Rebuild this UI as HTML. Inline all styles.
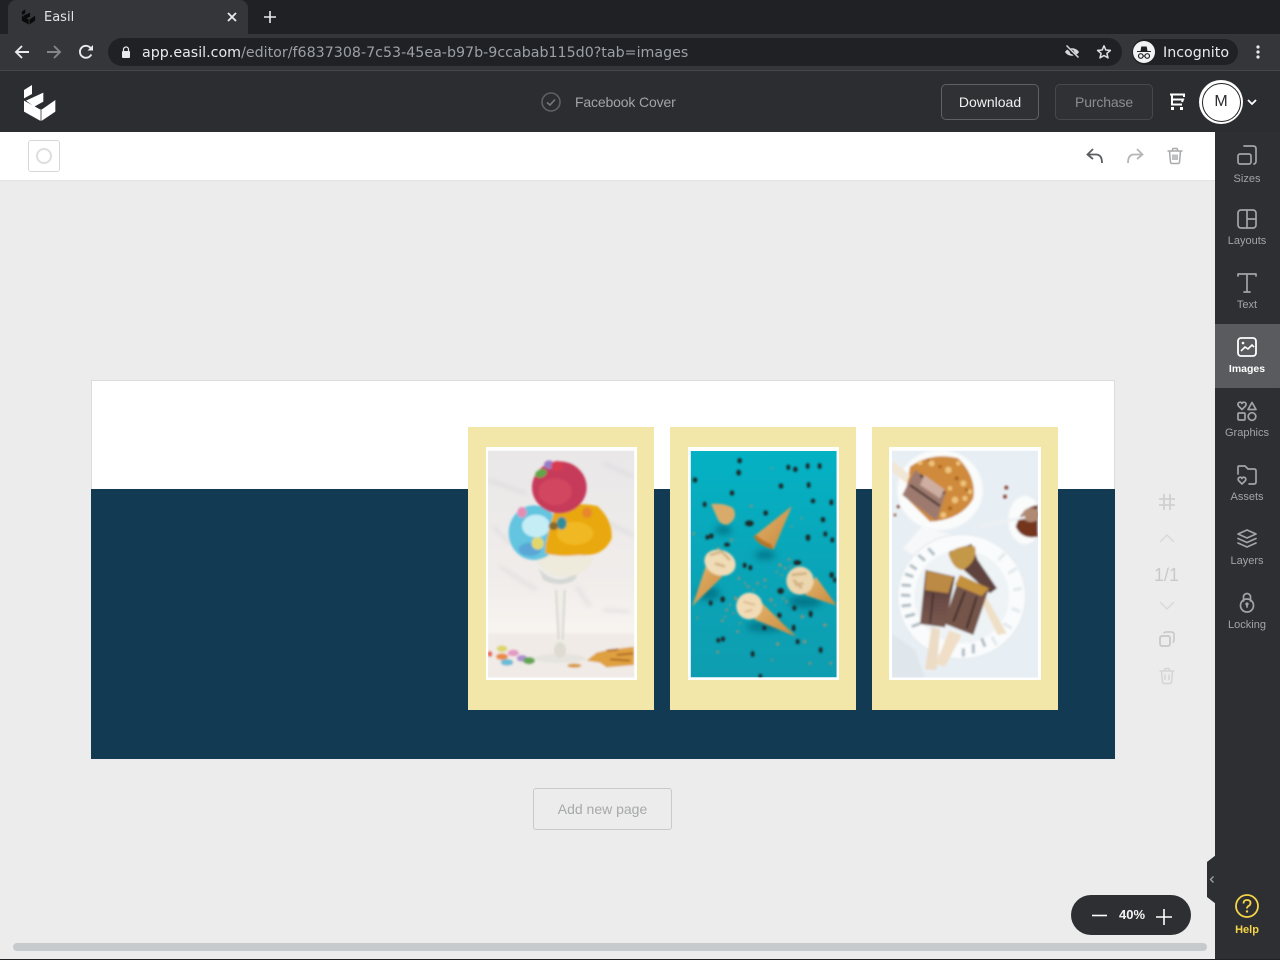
<!DOCTYPE html>
<html><head><meta charset="utf-8"><title>Easil</title>
<style>
*{box-sizing:border-box}
html,body{margin:0;padding:0;width:1280px;height:960px;overflow:hidden;background:#ececec;font-family:"Liberation Sans",sans-serif}
.a{position:absolute}
.t{position:absolute;white-space:nowrap;line-height:1}
.d{font-family:"DejaVu Sans",sans-serif}
svg{position:absolute;overflow:visible}
.lab{position:absolute;left:1214.500px;width:65px;text-align:center;font-size:11px;line-height:12px;color:#a3a4a6}
.ic{fill:none;stroke:#a3a4a6;stroke-width:1.7;stroke-linecap:round;stroke-linejoin:round}
</style></head><body>
<!-- browser chrome -->
<div class="a" style="left:0;top:0;width:1280px;height:34px;background:#202124"></div>
<div class="a" style="left:8px;top:0;width:240px;height:34px;background:#35363a;border-radius:8px 8px 0 0"></div>
<svg style="left:20px;top:9px" width="17" height="16" viewBox="20 12 102 114"><path d="M24 30 L48 15 V42 L24 55 Z M30 62 L82 38 V65 L55 80 Z M24 62 L72 88 V122 L24 95 Z M78 88 L118 60 V95 L78 122 Z" fill="#0a0a0a"/></svg>
<div class="t d" style="left:44px;top:11px;font-size:13px;color:#e3e4e6">Easil</div>
<svg style="left:227px;top:12px" width="10" height="10"><path d="M1 1 L9 9 M9 1 L1 9" stroke="#e8eaed" stroke-width="1.8"/></svg>
<svg style="left:264px;top:11px" width="12" height="12"><path d="M6 0 V12 M0 6 H12" stroke="#e8eaed" stroke-width="1.6"/></svg>
<div class="a" style="left:0;top:34px;width:1280px;height:37px;background:#35363a;border-bottom:1px solid #45464a"></div>
<svg style="left:14px;top:44px" width="16" height="16"><path d="M15 8 H2 M8 2 L2 8 L8 14" fill="none" stroke="#e8eaed" stroke-width="1.9"/></svg>
<svg style="left:46px;top:44px" width="16" height="16"><path d="M1 8 H14 M8 2 L14 8 L8 14" fill="none" stroke="#85868a" stroke-width="1.9"/></svg>
<svg style="left:78px;top:44px" width="16" height="16" viewBox="0 0 16 16"><path d="M13.3 10.5 A6 6 0 1 1 12.6 4" fill="none" stroke="#e8eaed" stroke-width="1.9"/><path d="M9.5 6.5 H15 V1 Z" fill="#e8eaed"/></svg>
<div class="a" style="left:108px;top:38px;width:1014px;height:28px;background:#202124;border-radius:14px"></div>
<svg style="left:121px;top:46px" width="10" height="12"><path d="M2.5 5 V3.5 A2.5 2.5 0 0 1 7.5 3.5 V5" fill="none" stroke="#e8eaed" stroke-width="1.2"/><rect x="1" y="5" width="8" height="7" rx="1" fill="#e8eaed"/></svg>
<div class="t d" style="left:142px;top:45px;font-size:14.24px;color:#e8eaed;line-height:16px">app.easil.com<span style="color:#9aa0a6">/editor/f6837308-7c53-45ea-b97b-9ccabab115d0?tab=images</span></div>
<svg style="left:1064px;top:44px" width="16" height="16" viewBox="0 0 16 16"><path d="M1 8 C4 3 12 3 15 8 C12 13 4 13 1 8 Z" fill="#d6d7d9"/><circle cx="8" cy="8" r="2.2" fill="#202124"/><path d="M2 2 L14 14" stroke="#202124" stroke-width="3"/><path d="M2.5 1.5 L14.5 13.5" stroke="#d6d7d9" stroke-width="1.5"/></svg>
<svg style="left:1096px;top:44px" width="16" height="16" viewBox="0 0 16 16"><path d="M8 1.8 L9.8 6 L14.4 6.4 L10.9 9.4 L12 13.9 L8 11.5 L4 13.9 L5.1 9.4 L1.6 6.4 L6.2 6 Z" fill="none" stroke="#e0e1e3" stroke-width="1.5" stroke-linejoin="round"/></svg>
<div class="a" style="left:1132px;top:39px;width:106px;height:26px;background:#202124;border-radius:13px"></div>
<svg style="left:1133px;top:41px" width="22" height="22" viewBox="0 0 22 22"><circle cx="11" cy="11" r="11" fill="#f1f3f4"/><path d="M4 10 H18 V11 H4 Z M7.5 10 L8.3 5.5 H13.7 L14.5 10 Z" fill="#202124"/><circle cx="7.8" cy="15" r="2.3" fill="none" stroke="#202124" stroke-width="1.2"/><circle cx="14.2" cy="15" r="2.3" fill="none" stroke="#202124" stroke-width="1.2"/><path d="M10 15 H12" stroke="#202124"/></svg>
<div class="t d" style="left:1163px;top:45px;font-size:14.24px;line-height:16px;color:#e8eaed">Incognito</div>
<svg style="left:1255px;top:45px" width="6" height="14"><circle cx="3" cy="2" r="1.6" fill="#e8eaed"/><circle cx="3" cy="7" r="1.6" fill="#e8eaed"/><circle cx="3" cy="12" r="1.6" fill="#e8eaed"/></svg>

<!-- app header -->
<div class="a" style="left:0;top:71px;width:1280px;height:61px;background:#2c2d30"></div>
<svg style="left:16px;top:80px" width="48" height="44" viewBox="0 0 144 132"><path d="M24 30 L48 15 V42 L24 55 Z M30 62 L82 38 V65 L55 80 Z M24 62 L72 88 V122 L24 95 Z M78 88 L118 60 V95 L78 122 Z" fill="#fff"/><path d="M72 88 L78 88 V122 L72 122 Z" fill="#b0b0b0"/></svg>
<svg style="left:541px;top:92px" width="20" height="20"><circle cx="10" cy="10" r="9" fill="none" stroke="#5f6063" stroke-width="1.6"/><path d="M6 10.5 L9 13 L14 7.5" fill="none" stroke="#77787b" stroke-width="1.6"/></svg>
<div class="t" style="left:575px;top:95px;font-size:14px;letter-spacing:-.15px;color:#a3a4a6">Facebook Cover</div>
<div class="a" style="left:941px;top:84px;width:98px;height:36px;border:1px solid #606164;border-radius:5px;background:#303134"></div>
<div class="t" style="left:941px;width:98px;text-align:center;top:95px;font-size:14px;color:#f1f1f2">Download</div>
<div class="a" style="left:1055px;top:84px;width:98px;height:36px;border:1px solid #47484b;border-radius:5px;background:#303134"></div>
<div class="t" style="left:1055px;width:98px;text-align:center;top:95px;font-size:14px;letter-spacing:-.15px;color:#8c8d8f">Purchase</div>
<svg style="left:1169px;top:93px" width="18" height="18" viewBox="0 0 18 18"><path d="M1 1.500 H15 V4 M3 1.500 V11.500 H13 M3 6.500 H14 L13 9" fill="none" stroke="#fff" stroke-width="2"/><rect x="2" y="14" width="3" height="3" fill="#fff"/><rect x="11" y="14" width="3" height="3" fill="#fff"/></svg>
<div class="a" style="left:1199px;top:80px;width:44px;height:44px;border-radius:50%;background:#fff"></div>
<div class="a" style="left:1201.500px;top:82.500px;width:39px;height:39px;border-radius:50%;background:#fff;border:1.500px solid #222"></div>
<div class="t" style="left:1199px;width:44px;text-align:center;top:94px;font-size:16px;color:#2c2d30">M</div>
<svg style="left:1247px;top:98px" width="10" height="8"><path d="M1 2 L5 6 L9 2" fill="none" stroke="#fff" stroke-width="1.8"/></svg>

<!-- toolbar -->
<div class="a" style="left:0;top:132px;width:1215px;height:49px;background:#fff;border-bottom:1px solid #e4e4e4"></div>
<div class="a" style="left:28px;top:140px;width:32px;height:32px;border:1px solid #d8d8d8;border-radius:3px;background:#fff"></div>
<div class="a" style="left:36px;top:148px;width:16px;height:16px;border:2px solid #dedede;border-radius:50%"></div>
<svg style="left:1086px;top:147px" width="18" height="18" viewBox="0 0 18 18"><path d="M7 2 L1.500 7.500 L7 12 M2 7.500 H10 C14 7.500 16 10 16 16" fill="none" stroke="#5c5d60" stroke-width="1.8"/></svg>
<svg style="left:1126px;top:147px" width="18" height="18" viewBox="0 0 18 18"><path d="M11 2 L16.500 7.500 L11 12 M16 7.500 H8 C4 7.500 2 10 2 16" fill="none" stroke="#b5b6b8" stroke-width="1.8"/></svg>
<svg style="left:1166px;top:147px" width="18" height="18" viewBox="0 0 18 18"><path d="M1.500 4 H16.500 M6 4 L7 1.500 H11 L12 4 M3.500 4 L4.500 15 Q4.600 16.500 6 16.500 H12 Q13.400 16.500 13.500 15 L14.500 4 M7 7.500 V13 M11 7.500 V13 M9 7.500 V13" fill="none" stroke="#a9aaac" stroke-width="1.500"/></svg>

<!-- canvas -->
<div class="a" style="left:91px;top:380px;width:1024px;height:110px;background:#fff;border:1px solid #dcdcdc;border-bottom:0"></div>
<div class="a" style="left:91px;top:489px;width:1024px;height:270px;background:#123a52"></div>

<!-- frame 1 -->
<div class="a" style="left:468px;top:427px;width:186px;height:283px;background:#f2e6a8"></div>
<div class="a" style="left:486px;top:447px;width:151px;height:233px;background:#fff"></div>
<svg style="left:460px;top:420px" width="210" height="300" viewBox="0 0 630 900">
<defs>
<clipPath id="c1"><rect x="84" y="92" width="439" height="681"/></clipPath>
<clipPath id="c2"><rect x="77" y="93" width="438" height="679"/></clipPath>
<clipPath id="c3"><rect x="81" y="92" width="438" height="681"/></clipPath>
<linearGradient id="m1" x1="0" y1="0" x2="0" y2="1"><stop offset="0" stop-color="#e9e7e8"/><stop offset=".6" stop-color="#f1edeb"/><stop offset=".78" stop-color="#f7f4f0"/><stop offset="1" stop-color="#f4efe9"/></linearGradient>
<linearGradient id="cone" x1="0" y1="0" x2="1" y2="1"><stop offset="0" stop-color="#e2b26c"/><stop offset="1" stop-color="#c98a3c"/></linearGradient>
<linearGradient id="pop" x1="0" y1="0" x2="0" y2="1"><stop offset="0" stop-color="#3e2a28"/><stop offset=".5" stop-color="#6a4a44"/><stop offset="1" stop-color="#7a5a50"/></linearGradient>
<filter id="b" x="-10%" y="-10%" width="120%" height="120%"><feGaussianBlur stdDeviation="3"/></filter>
<filter id="b2" x="-20%" y="-20%" width="140%" height="140%"><feGaussianBlur stdDeviation="10"/></filter>
<filter id="b3" x="-20%" y="-20%" width="140%" height="140%"><feGaussianBlur stdDeviation="6"/></filter>
</defs>
<g clip-path="url(#c1)"><rect x="84" y="92" width="439" height="681" fill="url(#m1)"/>
<path d="M84 180 L200 220 M430 130 L520 170 M400 290 L520 345 M120 440 L230 510 M350 500 L390 560 M430 570 L510 575 M100 320 L150 370" stroke="#d4d2d8" stroke-width="8" fill="none" opacity=".6" filter="url(#b3)"/>
<g filter="url(#b)">
<rect x="84" y="640" width="439" height="133" fill="#f0ebe6"/>
<path d="M235 445 Q300 510 360 445 L345 480 Q300 505 250 480 Z" fill="#d4d8d4"/>
<path d="M284 505 L318 505 L310 620 L315 680 L290 680 L296 620 Z" fill="#efeee8"/>
<path d="M288 510 L296 660 M314 510 L308 660" stroke="#c0beb4" stroke-width="3"/>
<ellipse cx="300" cy="715" rx="78" ry="14" fill="#e6e4de"/><ellipse cx="300" cy="690" rx="18" ry="24" fill="#dedbd2"/>
<path d="M228 415 Q310 385 402 412 Q385 468 310 470 Q248 470 228 415 Z" fill="#eeeadc"/>
<ellipse cx="222" cy="338" rx="76" ry="82" fill="#63c5e0"/><ellipse cx="228" cy="318" rx="42" ry="34" fill="#c4edf5"/><ellipse cx="210" cy="388" rx="34" ry="20" fill="#5aa6d6"/>
<path d="M256 375 Q268 320 285 265 Q340 245 412 258 Q458 300 455 355 Q430 412 360 405 Q300 412 256 400 Z" fill="#e9a811"/><ellipse cx="345" cy="340" rx="55" ry="35" fill="#f0b820"/>
<ellipse cx="298" cy="202" rx="82" ry="78" fill="#c73a5a"/><ellipse cx="285" cy="215" rx="50" ry="40" fill="#d2475f"/>
<ellipse cx="267" cy="134" rx="15" ry="13" fill="#9a7bc6"/><ellipse cx="291" cy="138" rx="17" ry="15" fill="#d83a50"/><ellipse cx="243" cy="160" rx="18" ry="12" fill="#5ea54a" transform="rotate(-20 243 160)"/>
<ellipse cx="186" cy="277" rx="14" ry="16" fill="#e68cb4"/><ellipse cx="381" cy="278" rx="15" ry="16" fill="#e8882c"/>
<ellipse cx="305" cy="310" rx="15" ry="19" fill="#2f8d98"/><ellipse cx="280" cy="318" rx="14" ry="12" fill="#8a6a2c"/><ellipse cx="233" cy="370" rx="18" ry="19" fill="#e2d768"/>
<ellipse cx="126" cy="686" rx="16" ry="10" fill="#dcd66a"/><ellipse cx="160" cy="699" rx="17" ry="10" fill="#e49ac4"/><ellipse cx="126" cy="710" rx="18" ry="10" fill="#ea8a44"/><ellipse cx="141" cy="727" rx="19" ry="10" fill="#6cbbd8"/><ellipse cx="186" cy="715" rx="16" ry="10" fill="#ae8ed0"/><ellipse cx="207" cy="722" rx="18" ry="11" fill="#62a652"/><ellipse cx="90" cy="702" rx="7" ry="9" fill="#e85a50"/>
<path d="M380 722 L410 698 L445 690 L522 680 V735 L440 742 L420 728 Z" fill="#dfa040"/><path d="M440 692 L475 688 M470 705 L520 700 M450 718 L510 722" stroke="#b06a22" stroke-width="6"/><ellipse cx="343" cy="737" rx="21" ry="6" fill="#d89838"/>
</g></g>
</svg>

<!-- frame 2 -->
<div class="a" style="left:670px;top:427px;width:186px;height:283px;background:#f2e6a8"></div>
<div class="a" style="left:688px;top:447px;width:151px;height:233px;background:#fff"></div>
<svg style="left:665px;top:420px" width="200" height="300" viewBox="0 0 600 900">
<defs><linearGradient id="m2" x1="0" y1="0" x2="0" y2="1"><stop offset="0" stop-color="#04b2c4"/><stop offset=".5" stop-color="#0aa5b8"/><stop offset="1" stop-color="#0e9db0"/></linearGradient></defs>
<g clip-path="url(#c2)"><rect x="77" y="93" width="438" height="679" fill="url(#m2)"/>
<g filter="url(#b2)" fill="#056a7e" opacity=".75"><ellipse cx="175" cy="330" rx="25" ry="14"/><ellipse cx="300" cy="405" rx="30" ry="14"/><ellipse cx="130" cy="520" rx="35" ry="20"/><ellipse cx="420" cy="545" rx="50" ry="18"/><ellipse cx="300" cy="620" rx="55" ry="15"/></g>
<g filter="url(#b)">
<g fill="#1c2c2c">
<ellipse cx="224" cy="122" rx="7" ry="8"/><ellipse cx="221" cy="158" rx="7" ry="9"/><ellipse cx="90" cy="180" rx="7" ry="8"/><ellipse cx="201" cy="219" rx="7" ry="8"/><ellipse cx="119" cy="253" rx="6" ry="8"/><ellipse cx="370" cy="142" rx="6" ry="8"/><ellipse cx="391" cy="148" rx="7" ry="8"/><ellipse cx="428" cy="138" rx="6" ry="9"/><ellipse cx="464" cy="138" rx="6" ry="9"/><ellipse cx="348" cy="198" rx="7" ry="8"/><ellipse cx="431" cy="195" rx="6" ry="9"/><ellipse cx="444" cy="243" rx="7" ry="7"/><ellipse cx="499" cy="247" rx="6" ry="9"/><ellipse cx="474" cy="299" rx="7" ry="8"/><ellipse cx="302" cy="279" rx="7" ry="8"/><ellipse cx="253" cy="310" rx="13" ry="9"/><ellipse cx="127" cy="352" rx="6" ry="7"/><ellipse cx="139" cy="348" rx="7" ry="8"/><ellipse cx="186" cy="374" rx="9" ry="6"/><ellipse cx="429" cy="353" rx="7" ry="10"/><ellipse cx="481" cy="342" rx="6" ry="8"/><ellipse cx="502" cy="360" rx="6" ry="8"/><ellipse cx="397" cy="428" rx="12" ry="8"/><ellipse cx="239" cy="436" rx="6" ry="8"/><ellipse cx="256" cy="443" rx="6" ry="8"/><ellipse cx="500" cy="465" rx="7" ry="9"/><ellipse cx="509" cy="480" rx="5" ry="8"/><ellipse cx="347" cy="513" rx="10" ry="9"/><ellipse cx="173" cy="538" rx="7" ry="9"/><ellipse cx="137" cy="549" rx="6" ry="8"/><ellipse cx="388" cy="564" rx="6" ry="8"/><ellipse cx="437" cy="582" rx="6" ry="10"/><ellipse cx="343" cy="586" rx="7" ry="8"/><ellipse cx="386" cy="624" rx="6" ry="10"/><ellipse cx="298" cy="624" rx="6" ry="7"/><ellipse cx="160" cy="661" rx="6" ry="7"/><ellipse cx="174" cy="657" rx="6" ry="8"/><ellipse cx="398" cy="665" rx="6" ry="8"/><ellipse cx="467" cy="690" rx="6" ry="9"/><ellipse cx="263" cy="702" rx="6" ry="9"/><ellipse cx="286" cy="768" rx="6" ry="6"/>
</g>
<g fill="#9a9272">
<circle cx="86" cy="341" r="4"/><circle cx="259" cy="258" r="4"/><circle cx="200" cy="360" r="4"/><circle cx="160" cy="385" r="4"/><circle cx="345" cy="435" r="5"/><circle cx="372" cy="418" r="4"/><circle cx="360" cy="445" r="4"/><circle cx="222" cy="475" r="4"/><circle cx="250" cy="500" r="4"/><circle cx="278" cy="490" r="4"/><circle cx="300" cy="480" r="4"/><circle cx="318" cy="540" r="5"/><circle cx="365" cy="545" r="4"/><circle cx="212" cy="535" r="5"/><circle cx="185" cy="570" r="4"/><circle cx="172" cy="602" r="4"/><circle cx="97" cy="593" r="3"/><circle cx="218" cy="635" r="4"/><circle cx="412" cy="590" r="5"/><circle cx="480" cy="615" r="5"/><circle cx="419" cy="665" r="5"/><circle cx="338" cy="672" r="5"/><circle cx="158" cy="696" r="4"/><circle cx="320" cy="720" r="3"/><circle cx="435" cy="730" r="4"/><circle cx="497" cy="730" r="4"/><circle cx="410" cy="295" r="3"/><circle cx="380" cy="320" r="3"/><circle cx="320" cy="145" r="3"/><circle cx="300" cy="500" r="3"/><circle cx="225" cy="610" r="3"/><circle cx="335" cy="455" r="3"/><circle cx="350" cy="465" r="3"/><circle cx="375" cy="440" r="3"/><circle cx="240" cy="490" r="3"/><circle cx="265" cy="510" r="3"/><circle cx="195" cy="555" r="3"/><circle cx="205" cy="580" r="3"/><circle cx="330" cy="555" r="3"/><circle cx="355" cy="535" r="3"/><circle cx="180" cy="590" r="3"/></g>
<path d="M138 252 Q180 248 205 265 Q220 295 190 313 Q165 318 155 290 Z" fill="#d8ab6a"/>
<path d="M381 258 L326 388 Q285 380 266 350 Z" fill="url(#cone)"/><path d="M266 350 Q285 380 326 388 L318 372 Q290 362 275 345 Z" fill="#b87428"/>
<path d="M82 558 L122 440 L172 470 Z" fill="url(#cone)"/><ellipse cx="165" cy="428" rx="48" ry="38" fill="#f0dcb6" transform="rotate(20 165 428)"/><path d="M135 405 L170 395 L195 420 M150 430 L180 440" stroke="#c09a68" stroke-width="8" fill="none" opacity=".6"/>
<path d="M515 557 L452 470 L420 525 Z" fill="url(#cone)"/><ellipse cx="405" cy="482" rx="41" ry="42" fill="#ecd6ae"/><path d="M380 465 L425 460 M390 495 L415 490 M385 480 L410 505" stroke="#c09a68" stroke-width="8" opacity=".6"/>
<path d="M393 650 L290 548 L268 598 Z" fill="url(#cone)"/><ellipse cx="253" cy="558" rx="39" ry="40" fill="#f2dcb6" transform="rotate(20 253 558)"/><path d="M235 545 L270 555 M240 575 L262 570" stroke="#c8a474" stroke-width="7" opacity=".5"/>
</g></g>
</svg>

<!-- frame 3 -->
<div class="a" style="left:872px;top:427px;width:186px;height:283px;background:#f2e6a8"></div>
<div class="a" style="left:889px;top:447px;width:152px;height:233px;background:#fff"></div>
<svg style="left:865px;top:420px" width="200" height="300" viewBox="0 0 600 900">
<g clip-path="url(#c3)"><rect x="81" y="92" width="438" height="681" fill="#e8eff4"/>
<g filter="url(#b)">
<path d="M81 640 L150 690 L180 773 H81 Z" fill="#dfe6ec"/>
<path d="M115 385 L170 320 L280 350 L150 410 Z" fill="#f6f8f9"/>
<ellipse cx="225" cy="210" rx="128" ry="120" fill="#fafbfb"/>
<path d="M135 140 Q200 95 280 115 Q335 170 325 235 Q290 300 195 305 L120 230 Z" fill="#cf8a3a"/>
<g fill="#eec27a"><circle cx="200" cy="130" r="9"/><circle cx="250" cy="150" r="10"/><circle cx="295" cy="190" r="9"/><circle cx="270" cy="240" r="10"/><circle cx="235" cy="285" r="9"/><circle cx="300" cy="235" r="8"/><circle cx="165" cy="128" r="7"/><circle cx="280" cy="130" r="7"/><circle cx="315" cy="215" r="7"/><circle cx="255" cy="205" r="7"/></g>
<g fill="#a8601e"><circle cx="225" cy="140" r="5"/><circle cx="275" cy="175" r="6"/><circle cx="255" cy="265" r="6"/><circle cx="305" cy="210" r="5"/><circle cx="190" cy="120" r="4"/></g>
<path d="M150 150 L243 215 L215 303 L112 225 Z" fill="#9e7a6e"/><path d="M165 165 L240 220 M135 195 L225 258" stroke="#4e3a34" stroke-width="7"/><path d="M178 165 L238 208 L225 235 L165 195 Z" fill="#cdaea0"/>
<path d="M85 125 L135 165 L125 190 L81 155 Z" fill="#f2e6d4"/>
<ellipse cx="290" cy="530" rx="192" ry="187" fill="#f9fbfc"/><ellipse cx="290" cy="530" rx="192" ry="187" fill="none" stroke="#dfe6ea" stroke-width="3"/>
<ellipse cx="290" cy="530" rx="142" ry="140" fill="#eef3f6"/>
<g stroke="#8f9fab" stroke-width="9" opacity=".7" fill="none"><path d="M135 435 L155 448 M120 462 L145 470 M110 495 L138 497 M108 525 L136 527 M110 558 L138 555 M120 590 L150 582 M140 620 L165 610 M295 685 V710 M325 672 V700 M250 680 L245 705 M160 405 L180 422 M190 385 L208 405 M350 655 L360 680"/></g>
<g stroke="#dbe3e8" stroke-width="9" opacity=".8" fill="none"><path d="M400 420 L420 400 M430 460 L455 445 M445 510 L470 505 M440 565 L465 575 M415 610 L440 625 M380 650 L395 675"/></g>
<path d="M360 525 L425 640 L398 645 L345 535 Z" fill="#efdfc6"/><path d="M200 620 L225 628 L215 750 L180 748 Z" fill="#ecdcc6"/><path d="M252 632 L290 645 L240 740 L213 732 Z" fill="#f0dec6"/>
<path d="M252 395 L320 372 L338 420 L396 505 L375 520 L285 440 Z" fill="#5e423c"/><path d="M250 400 Q290 370 330 380 Q340 420 295 450 Q265 450 250 400" fill="#c49848"/>
<path d="M182 450 L270 470 L240 622 L165 612 Z" fill="url(#pop)"/><path d="M184 452 L266 470 L250 520 L180 510 Z" fill="#bc8a44"/>
<path d="M285 465 L372 505 L325 645 L236 610 Z" fill="#75544a"/><path d="M285 465 L372 505 L350 528 L270 495 Z" fill="#c4923c"/><path d="M300 515 L265 605 M335 530 L305 625" stroke="#2e2220" stroke-width="5"/><path d="M205 520 L195 610" stroke="#2e2220" stroke-width="4"/>
<ellipse cx="480" cy="300" rx="50" ry="72" fill="#fafbfb"/><path d="M452 320 Q470 260 519 255 V350 Q470 360 452 320 Z" fill="#74351f"/><ellipse cx="498" cy="285" rx="26" ry="21" fill="#b08a72"/>
<path d="M345 320 L480 292" stroke="#edf1f3" stroke-width="8"/>
<g fill="#8a4a38"><circle cx="424" cy="203" r="6"/><circle cx="420" cy="230" r="6"/><circle cx="90" cy="285" r="4"/><circle cx="100" cy="260" r="5"/></g>
</g></g>
</svg>

<!-- page tools -->
<svg style="left:1158px;top:493px" width="18" height="18" viewBox="0 0 18 18"><path d="M1 6 H17 M1 12 H17 M6 1 V17 M12 1 V17" stroke="#cfd0d1" stroke-width="1.800"/></svg>
<svg style="left:1159px;top:533px" width="16" height="10"><path d="M1 9 L8 2 L15 9" fill="none" stroke="#d8d9da" stroke-width="1.500"/></svg>
<div class="t" style="left:1140px;width:53px;text-align:center;top:566px;font-size:18px;color:#c8c9cb">1/1</div>
<svg style="left:1159px;top:601px" width="16" height="10"><path d="M1 1 L8 8 L15 1" fill="none" stroke="#d8d9da" stroke-width="1.500"/></svg>
<svg style="left:1159px;top:631px" width="16" height="16" viewBox="0 0 16 16"><rect x="1" y="5" width="10" height="10" rx="2" fill="none" stroke="#c6c7c9" stroke-width="1.700"/><path d="M5 2.500 Q5 1 7 1 H12.500 Q15 1 15 3.500 V9 Q15 11 13.500 11" fill="none" stroke="#c6c7c9" stroke-width="1.500"/></svg>
<svg style="left:1158px;top:667px" width="18" height="18" viewBox="0 0 18 18"><path d="M1.500 4 H16.500 M6 4 L7 1.500 H11 L12 4 M3.500 4 L4.500 15 Q4.600 16.500 6 16.500 H12 Q13.400 16.500 13.500 15 L14.500 4 M7 7.500 V13 M11 7.500 V13" fill="none" stroke="#d4d5d6" stroke-width="1.500"/></svg>

<!-- add page -->
<div class="a" style="left:533px;top:788px;width:139px;height:42px;border:1px solid #c9c9c9;border-radius:3px"></div>
<div class="t" style="left:533px;width:139px;text-align:center;top:802px;font-size:14px;color:#a7a8aa">Add new page</div>

<!-- sidebar -->
<div class="a" style="left:1215px;top:132px;width:65px;height:828px;background:#2e2f33"></div>
<div class="a" style="left:1215px;top:324px;width:65px;height:64px;background:#5a5b5f"></div>
<div class="a" style="left:1215px;top:132px;width:65px;height:192px;background:#2e2f33;border-radius:0 0 6px 0"></div>
<div class="a" style="left:1215px;top:388px;width:65px;height:40px;background:#2e2f33;border-radius:0 6px 0 0"></div>

<svg class="ic" style="left:1237px;top:145px" width="20" height="20" viewBox="0 0 20 20"><rect x="1" y="9" width="13" height="10" rx="2"/><path d="M7 1 H16 Q19 1 19 4 V16 Q19 18.500 17 19"/></svg>
<div class="lab" style="top:173px">Sizes</div>
<svg class="ic" style="left:1237px;top:209px" width="20" height="20" viewBox="0 0 20 20"><rect x="1" y="1" width="18" height="18" rx="3"/><path d="M10 1 V19 M10 10 H19"/></svg>
<div class="lab" style="top:235px">Layouts</div>
<svg class="ic" style="left:1237px;top:273px" width="20" height="20" viewBox="0 0 20 20"><path d="M1 3 V1 H19 V3 M10 1 V19 M7 19 H13"/></svg>
<div class="lab" style="top:299px">Text</div>
<svg style="left:1237px;top:337px" width="20" height="20" viewBox="0 0 20 20"><rect x="1" y="1" width="18" height="18" rx="3" fill="none" stroke="#fff" stroke-width="1.800"/><path d="M4 14 L8 10 L11 12 L15 8 L17 10" fill="none" stroke="#fff" stroke-width="1.600"/><circle cx="6" cy="6" r="1.300" fill="#fff"/></svg>
<div class="lab" style="top:363px;color:#fff;font-weight:700;font-size:10.500px">Images</div>
<svg class="ic" style="left:1237px;top:401px" width="20" height="20" viewBox="0 0 20 20"><path d="M5 8.500 L1.500 5 Q0 2 2.500 1.300 Q4.500 1 5 2.500 Q5.500 1 7.500 1.300 Q10 2 8.500 5 Z"/><path d="M15 1.500 L19 8.500 H11 Z"/><rect x="1" y="12" width="7" height="7" rx="1"/><circle cx="15" cy="15.500" r="3.800"/></svg>
<div class="lab" style="top:427px">Graphics</div>
<svg class="ic" style="left:1237px;top:465px" width="20" height="20" viewBox="0 0 20 20"><path d="M1 9 V2 Q1 1 2 1 H8 L11 4 H17 Q19 4 19 6 V17 Q19 19 17 19 H12"/><path d="M5 19 L1.500 15.500 Q0.500 13 2.700 12.300 Q4.500 12 5 13.500 Q5.500 12 7.300 12.300 Q9.500 13 8.500 15.500 Z"/></svg>
<div class="lab" style="top:491px">Assets</div>
<svg class="ic" style="left:1237px;top:529px" width="20" height="20" viewBox="0 0 20 20"><path d="M10 1 L19 5 L10 9 L1 5 Z M1 9.500 L10 13.500 L19 9.500 M1 14 L10 18 L19 14"/></svg>
<div class="lab" style="top:555px">Layers</div>
<svg class="ic" style="left:1237px;top:593px" width="20" height="20" viewBox="0 0 20 20"><path d="M6.500 8 V4 A3.500 3.500 0 0 1 13.500 4 V8"/><circle cx="10" cy="12.500" r="6.500"/><circle cx="10" cy="11" r=".8"/><path d="M10 11 V14"/></svg>
<div class="lab" style="top:619px">Locking</div>

<svg style="left:1207px;top:855px" width="9" height="49" viewBox="0 0 9 49"><path d="M9 0 L0 7 V42 L9 49 Z" fill="#2e2f33"/><path d="M6.500 21.500 L3.500 24.500 L6.500 27.500" fill="none" stroke="#a3a4a6" stroke-width="1.300"/></svg>
<svg style="left:1235px;top:894px" width="24" height="24" viewBox="0 0 24 24"><circle cx="12" cy="12" r="11" fill="none" stroke="#f5d547" stroke-width="1.800"/><path d="M8.500 9.500 Q8.500 6 12 6 Q15.500 6 15.500 9 Q15.500 11 13.500 12 Q12 13 12 14.500" fill="none" stroke="#f5d547" stroke-width="1.800"/><circle cx="12" cy="17.500" r="1.200" fill="#f5d547"/></svg>
<div class="lab" style="top:924px;color:#f5d547;font-weight:700;font-size:11px">Help</div>

<!-- zoom -->
<div class="a" style="left:1071px;top:895px;width:120px;height:40px;border-radius:20px;background:#2e2f33"></div>
<svg style="left:1092px;top:914px" width="15" height="3"><path d="M0 1.500 H15" stroke="#fff" stroke-width="1.600"/></svg>
<div class="t" style="left:1071px;width:122px;text-align:center;top:908px;font-size:13px;font-weight:700;color:#f4f4f4">40%</div>
<svg style="left:1156px;top:909px" width="16" height="16"><path d="M0 8 H16 M8 0 V16" stroke="#fff" stroke-width="1.600"/></svg>

<!-- scrollbar -->
<div class="a" style="left:13px;top:943px;width:1194px;height:8px;border-radius:4px;background:#c6cacd"></div>
<div class="a" style="left:0;top:959px;width:1280px;height:1px;background:#202124"></div>
</body></html>
